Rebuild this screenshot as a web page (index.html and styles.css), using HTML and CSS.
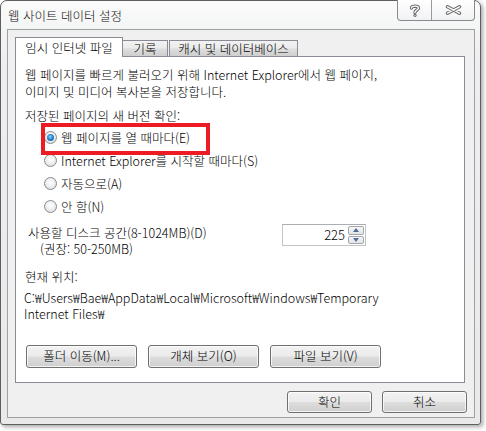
FILE: index.html
```html
<!DOCTYPE html>
<html lang="ko">
<head>
<meta charset="utf-8">
<title>웹 사이트 데이터 설정</title>
<link rel="stylesheet" href="styles.css">
</head>
<body>
<div class="window">
  <div class="titlebar">
    <span class="title">웹 사이트 데이터 설정</span>
    <div class="caption">
      <div class="cap-btn help">
        <svg width="12" height="13" viewBox="0 0 12 13">
          <path d="M2.5 4 C2.5 1.5 9.5 1.5 9.5 4 C9.5 6 6 6 6 8.5" fill="none" stroke="#6b6b6b" stroke-width="3.4" stroke-linecap="round"/>
          <circle cx="6" cy="11.3" r="1.6" fill="#6b6b6b"/>
          <path d="M2.5 4 C2.5 1.5 9.5 1.5 9.5 4 C9.5 6 6 6 6 8.5" fill="none" stroke="#fff" stroke-width="1.4" stroke-linecap="round"/>
          <circle cx="6" cy="11.3" r="0.6" fill="#fff"/>
        </svg>
      </div>
      <div class="cap-btn close">
        <svg width="17" height="10" viewBox="0 0 17 10">
          <path d="M2.5 1.8 L14.5 8.2 M14.5 1.8 L2.5 8.2" fill="none" stroke="#6b6b6b" stroke-width="3.4" stroke-linecap="round"/>
          <path d="M2.5 1.8 L14.5 8.2 M14.5 1.8 L2.5 8.2" fill="none" stroke="#fff" stroke-width="1.4" stroke-linecap="round"/>
        </svg>
      </div>
    </div>
  </div>
  <div class="client">
    <div class="tabs">
      <div class="tab active">임시 인터넷 파일</div>
      <div class="tab t2">기록</div>
      <div class="tab t3">캐시 및 데이터베이스</div>
    </div>
    <div class="panel">
      <p class="desc">웹 페이지를 빠르게 불러오기 위해 Internet Explorer에서 웹 페이지,<br>이미지 및 미디어 복사본을 저장합니다.</p>
      <div class="label">저장된 페이지의 새 버전 확인:</div>
      <div class="radios">
        <div class="radio-row"><span class="radio checked"></span><span>웹 페이지를 열 때마다(E)</span></div>
        <div class="radio-row"><span class="radio"></span><span>Internet Explorer를 시작할 때마다(S)</span></div>
        <div class="radio-row"><span class="radio"></span><span>자동으로(A)</span></div>
        <div class="radio-row"><span class="radio"></span><span>안 함(N)</span></div>
      </div>
      <div class="disk">
        <div class="disk-label">
          <div>사용할 디스크 공간(8-1024MB)(D)</div>
          <div class="indent">(권장: 50-250MB)</div>
        </div>
        <div class="spin">
          <span class="spin-value">225</span>
          <div class="spin-btns">
            <div class="spin-btn"><span class="tri up"></span></div>
            <div class="spin-btn"><span class="tri down"></span></div>
          </div>
        </div>
      </div>
      <div class="loc-label">현재 위치:</div>
      <div class="path">
        <div>C:₩Users₩Bae₩AppData₩Local₩Microsoft₩Windows₩Temporary</div>
        <div>Internet Files₩</div>
      </div>
      <div class="btn-row">
        <button class="btn wide">폴더 이동(M)...</button>
        <button class="btn wide">개체 보기(O)</button>
        <button class="btn wide">파일 보기(V)</button>
      </div>
    </div>
    <div class="dlg-buttons">
      <button class="btn small">확인</button>
      <button class="btn small">취소</button>
    </div>
  </div>
</div>
<div class="highlight"></div>
</body>
</html>
```

FILE: styles.css
```css
html, body {
  margin: 0;
  padding: 0;
  background: #ffffff;
}
body {
  width: 486px;
  height: 431px;
  position: relative;
  font-family: "Noto Sans CJK KR", "Noto Sans", sans-serif;
  font-size: 12.5px;
  font-weight: 300;
  color: #000;
  overflow: hidden;
}
.window {
  box-sizing: border-box;
  width: 481px;
  height: 425px;
  border: 1px solid #5e5e5e;
  border-radius: 7px 7px 3px 3px;
  background: linear-gradient(#fbfbfb, #eceef0 60px, #e9e9e9);
  box-shadow: 2px 2px 4px rgba(0, 0, 0, 0.35);
  display: flex;
  flex-direction: column;
}
.titlebar {
  height: 28px;
  display: flex;
  justify-content: space-between;
  align-items: flex-start;
}
.title {
  padding-left: 7px;
  line-height: 29px;
  color: #111;
}
.caption {
  display: flex;
  margin-right: 5px;
  margin-top: -1px;
  height: 21px;
  border: 1px solid #8a8a8a;
  border-top: none;
  border-radius: 0 0 4px 4px;
  background: linear-gradient(#ffffff, #f1f2f4);
  box-sizing: border-box;
}
.cap-btn {
  display: flex;
  align-items: center;
  justify-content: center;
}
.help {
  width: 33px;
  border-right: 1px solid #9a9a9a;
}
.close {
  width: 42px;
}
.client {
  box-sizing: border-box;
  height: 389px;
  margin: 0 5px 6px 6px;
  border: 1px solid #a0a0a0;
  background: #f0f0f0;
  padding: 7px 9px 0 7px;
}
.tabs {
  display: flex;
  align-items: flex-end;
  height: 19px;
  position: relative;
  z-index: 2;
}
.tab {
  box-sizing: border-box;
  height: 16px;
  line-height: 15px;
  border: 1px solid #898c95;
  border-bottom: none;
  background: linear-gradient(#f2f2f2, #ebebeb 45%, #dddddd 55%, #cfcfcf);
  text-align: center;
  white-space: nowrap;
}
.tab.active {
  width: 108px;
  height: 20px;
  line-height: 19px;
  margin-bottom: -1px;
  background: #ffffff;
}
.tab.t2 {
  width: 45px;
  border-left: none;
}
.tab.t3 {
  width: 129px;
  margin-left: 1px;
}
.panel {
  box-sizing: border-box;
  height: 327px;
  border: 1px solid #898c95;
  background: #ffffff;
  padding: 9px 0 0 9px;
}
.desc {
  margin: 0;
  line-height: 17px;
}
.label {
  margin-top: 7px;
  line-height: 17px;
}
.radios {
  margin-top: 2px;
  padding-left: 19px;
}
.radio-row {
  height: 23px;
  display: flex;
  align-items: center;
}
.radio {
  box-sizing: border-box;
  width: 13px;
  height: 13px;
  border-radius: 50%;
  border: 1px solid #8a8a8a;
  background: radial-gradient(circle at 50% 40%, #ffffff 0%, #f4f4f4 35%, #d6d6d6 100%);
  margin-right: 4px;
  position: relative;
  flex: none;
}
.radio.checked::after {
  content: "";
  position: absolute;
  left: 2px;
  top: 2px;
  width: 7px;
  height: 7px;
  border-radius: 50%;
  background: radial-gradient(circle at 45% 40%, #9fd8fb 0%, #2c8fd3 40%, #174a8a 100%);
}
.disk {
  margin-top: 7px;
  display: flex;
  align-items: flex-start;
  padding-left: 3px;
}
.disk-label {
  width: 254px;
  line-height: 15.5px;
}
.indent {
  padding-left: 12px;
}
.spin {
  box-sizing: border-box;
  width: 84px;
  height: 22px;
  margin-top: -1px;
  border: 1px solid #c2c4ca;
  border-top-color: #abadb3;
  display: flex;
  align-items: stretch;
  background: #fff;
}
.spin-value {
  flex: 1;
  text-align: right;
  padding-right: 3px;
  line-height: 20px;
  font-size: 13px;
}
.spin-btns {
  width: 16px;
  display: flex;
  flex-direction: column;
  gap: 1px;
  padding: 1px 1px 1px 0;
}
.spin-btn {
  flex: 1;
  border: 1px solid #a4a7ad;
  border-radius: 2px;
  background: linear-gradient(#f7f7f7, #e4e4e4);
  display: flex;
  align-items: center;
  justify-content: center;
}
.tri {
  width: 0;
  height: 0;
  border-left: 3.5px solid transparent;
  border-right: 3.5px solid transparent;
}
.tri.up {
  border-bottom: 4px solid #4e6c9a;
}
.tri.down {
  border-top: 4px solid #4e6c9a;
}
.loc-label {
  margin-top: 13px;
  line-height: 16px;
}
.path {
  margin-top: 5px;
  margin-left: -1px;
  line-height: 15.5px;
}
.btn-row {
  display: flex;
  gap: 11px;
  margin-top: 24px;
  padding-left: 1px;
}
.btn {
  box-sizing: border-box;
  font-family: inherit;
  font-size: 12.5px;
  font-weight: 300;
  color: #000;
  border: 1px solid #707070;
  border-radius: 3px;
  background: linear-gradient(#f2f2f2, #ebebeb 48%, #dddddd 52%, #cfcfcf);
  box-shadow: inset 0 0 0 1px rgba(255, 255, 255, 0.75);
  padding: 0;
  margin: 0;
  line-height: 1;
}
.btn.wide {
  width: 111px;
  height: 23px;
}
.btn.small {
  width: 85px;
  height: 22px;
}
.dlg-buttons {
  display: flex;
  justify-content: flex-end;
  gap: 10px;
  margin-top: 8px;
  margin-right: -2px;
}
.highlight {
  position: absolute;
  left: 41px;
  top: 123px;
  width: 169px;
  height: 32px;
  box-sizing: border-box;
  border: 4px solid #ed1c24;
}
```
